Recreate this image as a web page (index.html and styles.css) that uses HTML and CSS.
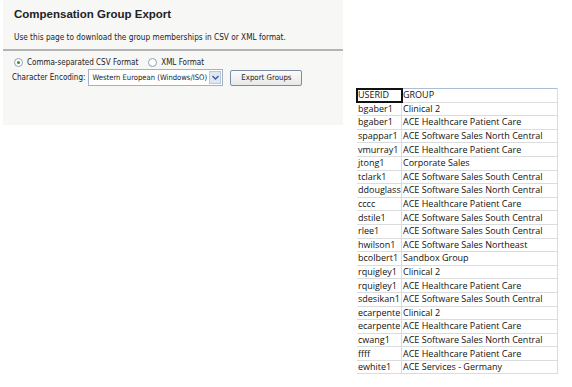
FILE: index.html
```html
<!DOCTYPE html>
<html lang="en">
  <head>
    <meta charset="UTF-8" />
    <title>Compensation Group Export</title>
    <link rel="stylesheet" href="styles.css">
  </head>
  <body>
    <div class="page">
      <div class="panel">
        <h1>Compensation Group Export</h1>
        <p class="intro">Use this page to download the group memberships in CSV or XML format.</p>
        <div class="form">
          <div class="formats">
            <label><span class="radio on"></span>Comma-separated CSV Format</label>
            <label><span class="radio"></span>XML Format</label>
          </div>
          <div class="encoding">
            <span class="lbl">Character Encoding:</span>
            <div class="select">
              <span>Western European (Windows/ISO)</span>
              <span class="drop">
                <svg width="7" height="5" viewBox="0 0 7 5"><path d="M0.5 1 L3.5 4 L6.5 1" fill="none" stroke="#3a5a9a" stroke-width="1.4"/></svg>
              </span>
            </div>
            <button>Export Groups</button>
          </div>
        </div>
      </div>

      <table class="sheet">
        <tr><td class="active">USERID</td><td>GROUP</td></tr>
        <tr><td>bgaber1</td><td>Clinical 2</td></tr>
        <tr><td>bgaber1</td><td>ACE Healthcare Patient Care</td></tr>
        <tr><td>spappar1</td><td>ACE Software Sales North Central</td></tr>
        <tr><td>vmurray1</td><td>ACE Healthcare Patient Care</td></tr>
        <tr><td>jtong1</td><td>Corporate Sales</td></tr>
        <tr><td>tclark1</td><td>ACE Software Sales South Central</td></tr>
        <tr><td>ddouglass</td><td>ACE Software Sales North Central</td></tr>
        <tr><td>cccc</td><td>ACE Healthcare Patient Care</td></tr>
        <tr><td>dstile1</td><td>ACE Software Sales South Central</td></tr>
        <tr><td>rlee1</td><td>ACE Software Sales South Central</td></tr>
        <tr><td>hwilson1</td><td>ACE Software Sales Northeast</td></tr>
        <tr><td>bcolbert1</td><td>Sandbox Group</td></tr>
        <tr><td>rquigley1</td><td>Clinical 2</td></tr>
        <tr><td>rquigley1</td><td>ACE Healthcare Patient Care</td></tr>
        <tr><td>sdesikan1</td><td>ACE Software Sales South Central</td></tr>
        <tr><td>ecarpente</td><td>Clinical 2</td></tr>
        <tr><td>ecarpente</td><td>ACE Healthcare Patient Care</td></tr>
        <tr><td>cwang1</td><td>ACE Software Sales North Central</td></tr>
        <tr><td>ffff</td><td>ACE Healthcare Patient Care</td></tr>
        <tr><td>ewhite1</td><td>ACE Services - Germany</td></tr>
      </table>
    </div>
  </body>
</html>
```

FILE: styles.css
```css
html,
body {
  margin: 0;
  padding: 0;
  background: white;
}
.page {
  display: flex;
  align-items: flex-start;
  padding-left: 3px;
}
.panel {
  width: 340px;
  height: 125px;
  background-color: #f7f7f5;
  font-family: "DejaVu Sans Condensed", "DejaVu Sans", sans-serif;
  color: #222;
}
h1 {
  margin: 0;
  padding: 7px 0 0 11px;
  font-family: "Liberation Sans", Arial, sans-serif;
  font-size: 11.5px;
  line-height: 14px;
  font-weight: bold;
  height: 18px;
}
.intro {
  margin: 0;
  padding: 7px 0 6px 11px;
  font-size: 8.2px;
  line-height: 11px;
  height: 11px;
  border-bottom: 2px solid #b4b4b4;
}
.form {
  padding: 5px 0 0 9px;
  font-size: 8px;
}
.formats {
  display: flex;
  gap: 10px;
  padding-left: 2px;
  height: 12px;
  align-items: center;
}
.formats label {
  display: flex;
  align-items: center;
}
.radio {
  width: 7px;
  height: 7px;
  border: 1px solid #8d9fb7;
  border-radius: 50%;
  background: white;
  margin-right: 4px;
  position: relative;
}
.radio.on::after {
  content: "";
  position: absolute;
  left: 2px;
  top: 2px;
  width: 3px;
  height: 3px;
  border-radius: 50%;
  background: #3a8a3a;
}
.encoding {
  display: flex;
  align-items: center;
  margin-top: 1px;
}
.lbl {
  margin-right: 3px;
}
.select {
  display: flex;
  align-items: center;
  width: 135px;
  height: 17px;
  border: 1px solid #9fb2c7;
  background: white;
  font-size: 7.6px;
  box-sizing: border-box;
  padding-left: 3px;
  white-space: nowrap;
}
.select span:first-child {
  flex: 1;
}
.drop {
  width: 12px;
  height: 13px;
  margin-right: 1px;
  background: #dfe7f4;
  border: 1px solid #b9c8dd;
  box-sizing: border-box;
  display: flex;
  align-items: center;
  justify-content: center;
}
button {
  margin-left: 7px;
  width: 72px;
  height: 16px;
  font-family: "DejaVu Sans Condensed", "DejaVu Sans", sans-serif;
  font-size: 7.8px;
  color: #222;
  background: linear-gradient(#fbfbfb, #e8e8e8);
  border: 1px solid #7b8da6;
  border-radius: 2px;
  padding: 0;
}
.sheet {
  margin: 88px 0 0 14px;
  border-collapse: collapse;
  border-top: 1px solid #a9bfd6;
  font-family: "Open Sans", "Liberation Sans", sans-serif;
  font-size: 9px;
  color: #111;
  width: 201px;
  table-layout: fixed;
  border-right: 1px solid #dbe3ec;
}
.sheet td {
  height: 12.6px;
  padding: 0 0 0 1px;
  border-bottom: 1px solid #dadcdd;
  border-right: 1px solid #dadcdd;
  white-space: nowrap;
  overflow: hidden;
  line-height: 12px;
}
.sheet td:first-child {
  width: 43px;
}
.sheet td.active {
  outline: 2px solid #111;
  outline-offset: -1px;
}
```
